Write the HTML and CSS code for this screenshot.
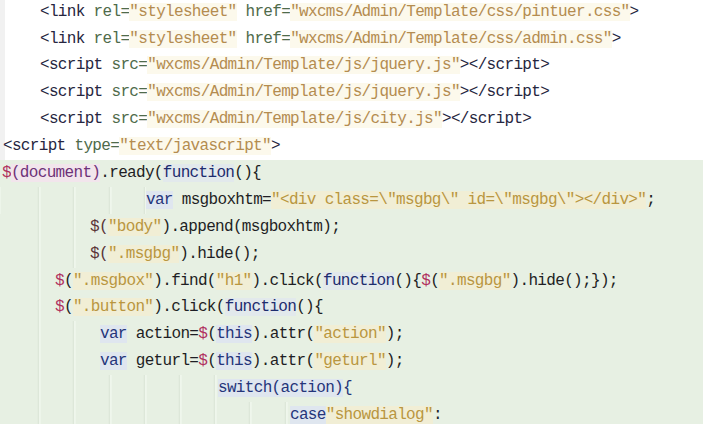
FILE: index.html
```html
<!DOCTYPE html>
<html>
<head>
<meta charset="utf-8">
<link rel="stylesheet" href="styles.css">
</head>
<body>
<div class="editor">
  <div class="plain">
    <div class="line"><span class="ind w40"></span><span class="tg">&lt;link</span> <span class="at">rel=</span><span class="hs">"stylesheet"</span> <span class="at">href=</span><span class="hs">"wxcms/Admin/Template/css/pintuer.css"</span><span class="tg">&gt;</span></div>
    <div class="line"><span class="ind w40"></span><span class="tg">&lt;link</span> <span class="at">rel=</span><span class="hs">"stylesheet"</span> <span class="at">href=</span><span class="hs">"wxcms/Admin/Template/css/admin.css"</span><span class="tg">&gt;</span></div>
    <div class="line"><span class="ind w40"></span><span class="tg">&lt;script</span> <span class="at">src=</span><span class="hs">"wxcms/Admin/Template/js/jquery.js"</span><span class="tg">&gt;&lt;/script&gt;</span></div>
    <div class="line"><span class="ind w40"></span><span class="tg">&lt;script</span> <span class="at">src=</span><span class="hs">"wxcms/Admin/Template/js/jquery.js"</span><span class="tg">&gt;&lt;/script&gt;</span></div>
    <div class="line"><span class="ind w40"></span><span class="tg">&lt;script</span> <span class="at">src=</span><span class="hs">"wxcms/Admin/Template/js/city.js"</span><span class="tg">&gt;&lt;/script&gt;</span></div>
    <div class="line"><span class="ind w3"></span><span class="tg">&lt;script</span> <span class="at">type=</span><span class="hs">"text/javascript"</span><span class="tg">&gt;</span></div>
  </div>
  <div class="js">
    <div class="line"><span class="ind w2"></span><span class="dl">$</span><span class="obj">(document)</span>.ready(<span class="fn">function</span>(){</div>
    <div class="line"><span class="ind w146"></span><span class="kw">var</span> msgboxhtm=<span class="js-s">"&lt;div class=\"msgbg\" id=\"msgbg\"&gt;&lt;/div&gt;"</span>;</div>
    <div class="line"><span class="ind w90"></span><span class="dd">$(</span><span class="js-s">"body"</span>).append(msgboxhtm);</div>
    <div class="line"><span class="ind w90"></span><span class="dd">$(</span><span class="js-s">".msgbg"</span>).hide();</div>
    <div class="line"><span class="ind w55"></span><span class="dl">$</span>(<span class="js-s">".msgbox"</span>).find(<span class="js-s">"h1"</span>).click(<span class="fn">function</span>(){<span class="dl">$</span>(<span class="js-s">".msgbg"</span>).hide();});</div>
    <div class="line"><span class="ind w55"></span><span class="dl">$</span>(<span class="js-s">".button"</span>).click(<span class="fn">function</span>(){</div>
    <div class="line"><span class="ind w100"></span><span class="kw">var</span> action=<span class="dl">$</span>(<span class="kw">this</span>).attr(<span class="js-s">"action"</span>);</div>
    <div class="line"><span class="ind w100"></span><span class="kw">var</span> geturl=<span class="dl">$</span>(<span class="kw">this</span>).attr(<span class="js-s">"geturl"</span>);</div>
    <div class="line"><span class="ind w218"></span><span class="kw">switch(action)</span><span class="nv">{</span></div>
    <div class="line"><span class="ind w290"></span><span class="kw">case</span><span class="js-s">"showdialog"</span>:</div>
  </div>
</div>
</body>
</html>
```
FILE: styles.css
```css
html, body {
  margin: 0;
  padding: 0;
  background: #ffffff;
  overflow: hidden;
}

.editor {
  width: 703px;
  height: 424px;
  overflow: hidden;
  font-family: "Liberation Mono", "DejaVu Sans Mono", monospace;
  font-size: 16px;
  letter-spacing: -0.67px;
  color: #1e1e24;
}

.plain {
  margin-top: -1.4px;
  background: linear-gradient(to right, #f1f1f1 0, #f1f1f1 5px, #ffffff 5px);
}

.js {
  background: #e7f0e3;
  height: 300px;
}

.line {
  height: 26.9px;
  line-height: 26.9px;
  white-space: pre;
}

.ind {
  display: inline-block;
  height: 26.9px;
  vertical-align: top;
}

.js .ind {
  background-image: repeating-linear-gradient(90deg,
    transparent 0px, transparent 32.2px,
    #d8e3d4 32.2px, #d8e3d4 33.2px,
    #eff6ec 33.2px, #eff6ec 35.2px);
  background-position: 5.8px 0;
}

.w2 { width: 2px; }
.w3 { width: 3px; }
.w40 { width: 40px; }
.w55 { width: 55px; }
.w90 { width: 90px; }
.w100 { width: 100px; }
.w146 { width: 146px; }
.w218 { width: 218px; }
.w290 { width: 290px; }

/* HTML tokens */
.tg { color: #262640; }
.at { color: #4f6b4b; }
.hs {
  color: #b48c50;
  background: #fcf9ec;
}

/* JS tokens */
.dl { color: #b0305e; }
.dd { color: #5a3436; }
.obj {
  color: #6e3278;
  background: #f2e5ec;
}
.fn {
  color: #1d2c6e;
  background: #e2e9ec;
}
.kw {
  color: #25357a;
  background: #dfe6ef;
}
.nv { color: #25357a; }
.js-s {
  color: #b99640;
  background: #f1eed5;
}
```
